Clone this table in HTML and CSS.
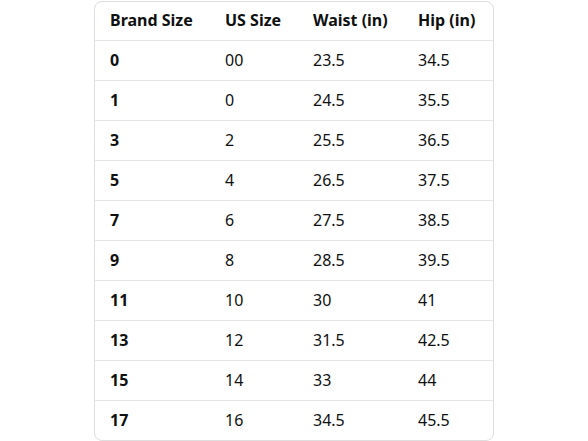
FILE: index.html
```html
<!DOCTYPE html>
<html lang="en">
<head>
<meta charset="utf-8">
<title>Size chart</title>
<link rel="stylesheet" href="styles.css">
</head>
<body>
<div class="card">
  <table class="chart">
    <thead>
      <tr><th>Brand Size</th><th>US Size</th><th>Waist (in)</th><th>Hip (in)</th></tr>
    </thead>
    <tbody>
      <tr><td>0</td><td>00</td><td>23.5</td><td>34.5</td></tr>
      <tr><td>1</td><td>0</td><td>24.5</td><td>35.5</td></tr>
      <tr><td>3</td><td>2</td><td>25.5</td><td>36.5</td></tr>
      <tr><td>5</td><td>4</td><td>26.5</td><td>37.5</td></tr>
      <tr><td>7</td><td>6</td><td>27.5</td><td>38.5</td></tr>
      <tr><td>9</td><td>8</td><td>28.5</td><td>39.5</td></tr>
      <tr><td>11</td><td>10</td><td>30</td><td>41</td></tr>
      <tr><td>13</td><td>12</td><td>31.5</td><td>42.5</td></tr>
      <tr><td>15</td><td>14</td><td>33</td><td>44</td></tr>
      <tr><td>17</td><td>16</td><td>34.5</td><td>45.5</td></tr>
    </tbody>
  </table>
</div>
</body>
</html>
```

FILE: styles.css
```css
html, body {
  margin: 0;
  padding: 0;
  background: #ffffff;
}
body {
  font-family: "Noto Sans", "Open Sans", "DejaVu Sans", sans-serif;
  color: #0f1111;
  padding-top: 1px;
}
.card {
  width: 398px;
  margin-left: 94px;
  border: 1px solid #dedede;
  border-radius: 8px;
  overflow: hidden;
}
.chart {
  width: 100%;
  border-collapse: separate;
  border-spacing: 0;
  table-layout: fixed;
  font-size: 16px;
}
.chart th, .chart td {
  box-sizing: border-box;
  padding: 0 0 2px 15px;
  text-align: left;
  vertical-align: middle;
  line-height: 20px;
  white-space: nowrap;
}
.chart th {
  height: 38px;
  font-weight: 700;
}
.chart td {
  height: 40px;
  font-weight: 400;
  border-top: 1px solid #e6e6e6;
}
.chart td:first-child {
  font-weight: 700;
}
.chart th:nth-child(1) { width: 115px; }
.chart th:nth-child(2) { width: 88px; }
.chart th:nth-child(3) { width: 105px; }
```
